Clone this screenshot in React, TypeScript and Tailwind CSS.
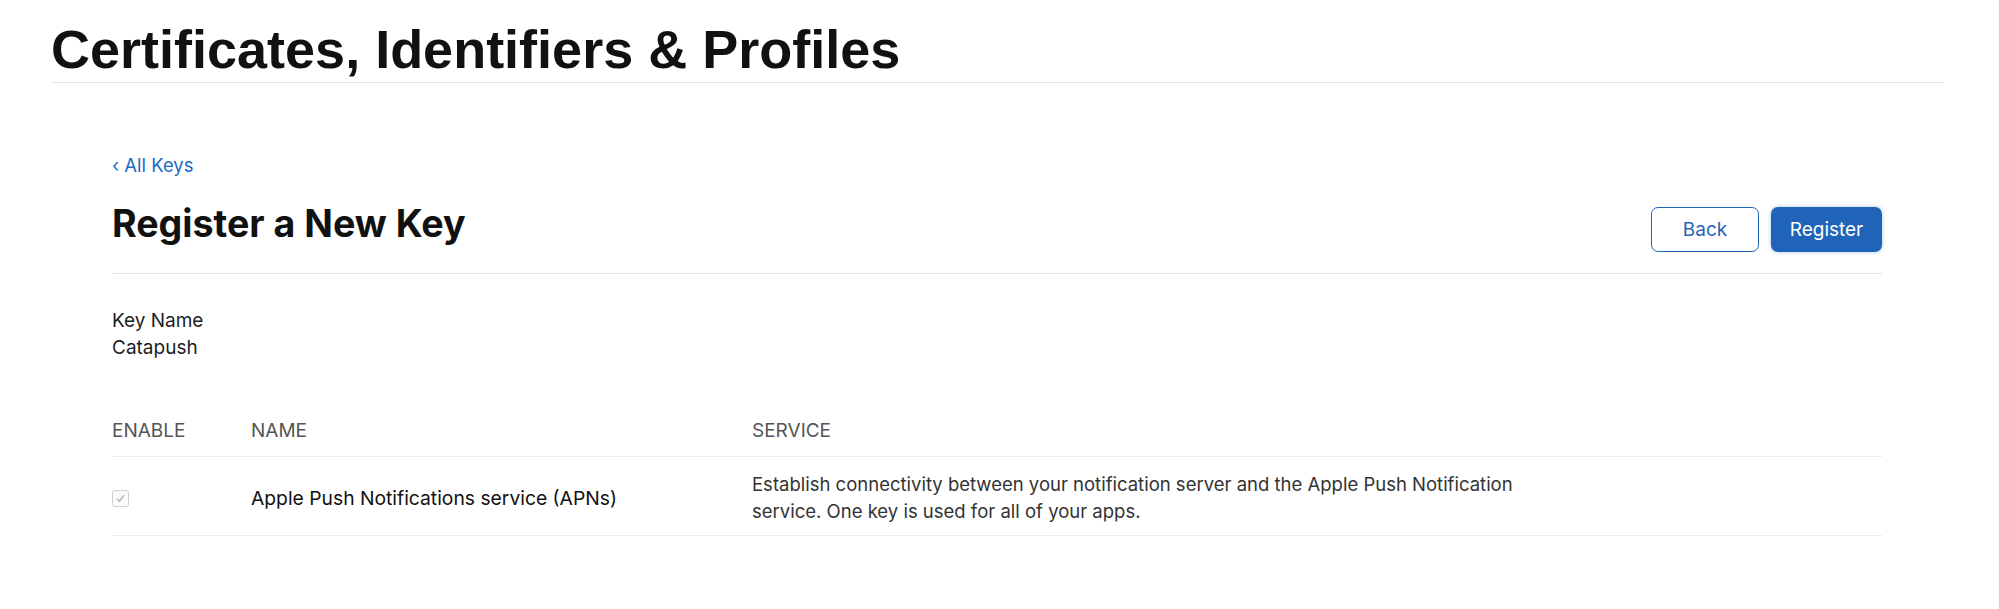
import React from 'react';

const services = [
  {
    id: 'apns',
    enabled: true,
    name: 'Apple Push Notifications service (APNs)',
    description:
      'Establish connectivity between your notification server and the Apple Push Notification service. One key is used for all of your apps.',
  },
];

const Checkbox = ({ checked }: { checked: boolean }) => (
  <span className="flex h-[17px] w-[17px] items-center justify-center rounded-[3px] border border-[#d0d0d0] bg-[#fbfbfb]">
    {checked && (
      <svg width="11" height="11" viewBox="0 0 12 12" fill="none">
        <path d="M2.5 6.5l2.3 2.6L9.6 2.8" stroke="#a8a8a8" strokeWidth="1.3" strokeLinecap="round" strokeLinejoin="round" />
      </svg>
    )}
  </span>
);

export default function App() {
  return (
    <div className="min-h-[609px] bg-white text-[#1d1d1f] font-['Inter','Liberation_Sans',sans-serif]">
      <header className="ml-[51px] mr-[55px] border-b border-[#e3e3e3] pt-[22px] pb-[6px]">
        <h1 className="font-['Liberation_Sans',Arial,sans-serif] text-[54px] font-bold leading-none text-[#111]">
          Certificates, Identifiers &amp; Profiles
        </h1>
      </header>

      <main className="ml-[112px] mr-[117px] pt-[70px]">
        <a href="#" className="block text-[18.5px] leading-[24px] text-[#1c6ac5]">
          ‹ All Keys
        </a>

        <div className="mt-[24px] flex items-start justify-between border-b border-[#e3e3e3] pb-[21px]">
          <h2 className="text-[37.6px] font-bold leading-[46px] text-[#111]">Register a New Key</h2>
          <div className="mt-[6px] flex gap-[12px]">
            <button className="h-[45px] w-[108px] rounded-[7px] border border-[#1f64b8] bg-white pt-[2px] text-[19px] text-[#1f64b8]">
              Back
            </button>
            <button className="h-[45px] w-[111px] rounded-[7px] bg-[#1f64b8] pt-[2px] text-[19px] text-white shadow-[0_0_4px_rgba(31,100,184,0.35)]">
              Register
            </button>
          </div>
        </div>

        <div className="mt-[33px] text-[19px] leading-[27px] text-[#1d1d1f]">
          <div>Key Name</div>
          <div>Catapush</div>
        </div>

        <div className="mt-[56px]">
          <div className="grid grid-cols-[139px_501px_1fr] border-b border-[#ececec] pb-[12px] text-[19px] leading-[27px] text-[#555]">
            <div>ENABLE</div>
            <div>NAME</div>
            <div>SERVICE</div>
          </div>
          {services.map(s => (
            <div
              key={s.id}
              className="grid grid-cols-[139px_501px_1fr] items-center border-b border-[#ececec] pt-[14px] pb-[10px] leading-[27px]"
            >
              <div>
                <Checkbox checked={s.enabled} />
              </div>
              <div className="text-[19.3px] text-[#111]">{s.name}</div>
              <div className="max-w-[790px] text-[18.5px] text-[#333]">{s.description}</div>
            </div>
          ))}
        </div>
      </main>
    </div>
  );
}
